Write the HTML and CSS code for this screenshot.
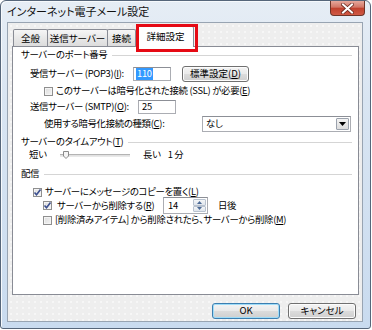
FILE: index.html
```html
<!DOCTYPE html>
<html>
	<head>
		<meta charset="UTF-8">
		<title>インターネット電子メール設定</title>
		<link rel="stylesheet" href="styles.css">
	</head>
	<body>
		<div class="window">
			<div class="titlebar">
				<span class="title">インターネット電子メール設定</span>
				<span class="close">
					<svg width="13" height="11" viewBox="0 0 13 11">
						<path d="M2 1.5 L11 9.5 M11 1.5 L2 9.5" stroke="#6b2a20" stroke-width="3.6" stroke-linecap="square"/>
						<path d="M2 1.5 L11 9.5 M11 1.5 L2 9.5" stroke="#fff" stroke-width="2" stroke-linecap="square"/>
					</svg>
				</span>
			</div>
			<div class="client">
				<div class="tabs">
					<span class="tab t1">全般</span>
					<span class="tab t2">送信サーバー</span>
					<span class="tab t3">接続</span>
					<span class="tab active">詳細設定<i class="mark"></i></span>
				</div>
				<div class="panel">
					<div class="group">サーバーのポート番号</div>
					<div class="row pop">
						<span class="label lpop">受信サーバー (POP3)(<u>I</u>):</span>
						<span class="input in-pop"><span class="sel">110</span></span>
						<span class="btn std">標準設定(<u>D</u>)</span>
					</div>
					<div class="row ssl">
						<i class="cb"></i>
						<span class="cbt">このサーバーは暗号化された接続 (SSL) が必要(<u>E</u>)</span>
					</div>
					<div class="row smtp">
						<span class="label lsmtp">送信サーバー (SMTP)(<u>O</u>):</span>
						<span class="input in-smtp">25</span>
					</div>
					<div class="row enc">
						<span class="label lenc">使用する暗号化接続の種類(<u>C</u>):</span>
						<span class="select">
							<span class="val">なし</span>
							<span class="drop">
								<svg width="7" height="4" viewBox="0 0 7 4"><path d="M0 0 H7 L3.5 4 Z" fill="#000"/></svg>
							</span>
						</span>
					</div>
					<div class="group g2">サーバーのタイムアウト(<u>T</u>)</div>
					<div class="row slide">
						<span class="short">短い</span>
						<span class="track">
							<svg class="thumb" width="6" height="8" viewBox="0 0 6 8"><path d="M0.5 0.5 H5.5 V5 L3 7.5 L0.5 5 Z" fill="#f4f4f4" stroke="#8a8a8a"/></svg>
						</span>
						<span class="long">長い</span>
						<span class="min">1 分</span>
					</div>
					<div class="group g3">配信</div>
					<div class="row c1">
						<i class="cb on"><svg width="9" height="9" viewBox="0 0 9 9"><path d="M1.5 4.5 L3.5 6.8 L7.5 1.5" fill="none" stroke="#3b4f8f" stroke-width="1.6"/></svg></i>
						<span class="cbt">サーバーにメッセージのコピーを置く(<u>L</u>)</span>
					</div>
					<div class="row c2">
						<i class="cb on"><svg width="9" height="9" viewBox="0 0 9 9"><path d="M1.5 4.5 L3.5 6.8 L7.5 1.5" fill="none" stroke="#3b4f8f" stroke-width="1.6"/></svg></i>
						<span class="cbt ldel">サーバーから削除する(<u>R</u>)</span>
						<span class="input spin">
							<span class="num">14</span>
							<span class="arrows">
								<span class="arr"><svg width="5" height="3" viewBox="0 0 5 3"><path d="M0 3 L2.5 0 L5 3 Z" fill="#4c6a96"/></svg></span>
								<span class="arr"><svg width="5" height="3" viewBox="0 0 5 3"><path d="M0 0 L2.5 3 L5 0 Z" fill="#4c6a96"/></svg></span>
							</span>
						</span>
						<span class="days">日後</span>
					</div>
					<div class="row c3">
						<i class="cb"></i>
						<span class="cbt">[削除済みアイテム] から削除されたら、サーバーから削除(<u>M</u>)</span>
					</div>
				</div>
				<div class="footer">
					<span class="btn ok">OK</span>
					<span class="btn">キャンセル</span>
				</div>
			</div>
		</div>
	</body>
</html>
```

FILE: styles.css
```css
*{
	box-sizing: border-box;
}
body{
	margin: 0;
	background: #fff;
	font: 9.4px/1 "Noto Sans CJK JP", "Noto Sans", sans-serif;
	font-feature-settings: "palt";
	letter-spacing: -0.3px;
	color: #000;
	white-space: nowrap;
}
u{
	text-decoration: underline;
	text-underline-offset: 1px;
}
.window{
	width: 371px;
	height: 329px;
	border: 1px solid #56667a;
	border-radius: 6px 6px 3px 3px;
	background: linear-gradient(to bottom, #e6edf5, #d9e5f2 30%, #c9dbef);
	box-shadow: inset 1px 1px 0 #f6f9fc;
}
.titlebar{
	height: 21px;
	display: flex;
	align-items: flex-start;
	padding-left: 6px;
}
.title{
	font-size: 11px;
	letter-spacing: 0;
	padding-top: 5px;
	color: #111;
}
.close{
	margin-left: auto;
	margin-right: 5px;
	width: 35px;
	height: 15px;
	border: 1px solid #6e3428;
	border-top: none;
	border-radius: 0 0 4px 4px;
	background: linear-gradient(to bottom, #e6a89c, #d27565 45%, #c0402d 50%, #d05a45);
	display: flex;
	align-items: center;
	justify-content: center;
}
.client{
	margin: 0 7px 0 6px;
	height: 300px;
	border: 1px solid #98a4b2;
	padding: 3px 3px 0 4px;
	background-color: #eeeeee;
	background-image: radial-gradient(circle, #fbfbfb 0.6px, transparent 0.9px);
	background-size: 6px 6px;
}
.tabs{
	height: 20px;
	display: flex;
	align-items: flex-start;
	padding-left: 1px;
	font-size: 9.5px;
	letter-spacing: 0;
}
.tab{
	height: 17px;
	margin-top: 3px;
	border: 1px solid #898c95;
	border-bottom: none;
	border-radius: 2px 2px 0 0;
	background: linear-gradient(to bottom, #f6f6f6, #e8e8e8 50%, #dcdcdc);
	display: flex;
	align-items: center;
	justify-content: center;
	padding-top: 1px;
}
.t1{
	width: 35px;
}
.t2{
	width: 61px;
	margin-left: -1px;
}
.t3{
	width: 29px;
	margin-left: -1px;
}
.tab.active{
	width: 57px;
	height: 21px;
	margin-top: 0;
	margin-left: 1px;
	background: #fff;
	position: relative;
	z-index: 1;
	padding-top: 0;
}
.mark{
	position: absolute;
	left: -2px;
	top: -3px;
	width: 62px;
	height: 28px;
	border: 3px solid #e60a14;
}
.panel{
	height: 249px;
	border: 1px solid #898c95;
	background: #fff;
	padding: 2px 6px 0 8px;
}
.group{
	height: 12px;
	display: flex;
	align-items: center;
}
.group::after{
	content: "";
	flex: 1;
	height: 1px;
	background: #d5d5d5;
	margin-left: 5px;
}
.g2{
	margin-top: 4px;
}
.g3{
	margin-top: 7px;
}
.row{
	display: flex;
	align-items: center;
}
.label{
	flex: none;
	margin-left: 9px;
}
.lpop{
	width: 103px;
}
.lsmtp{
	width: 108px;
}
.lenc{
	width: 158px;
	margin-left: 23px;
}
.pop{
	height: 16px;
	margin-top: 5px;
}
.ssl{
	height: 12px;
	margin-top: 3px;
	padding-left: 23px;
}
.smtp{
	height: 15px;
	margin-top: 2px;
}
.enc{
	height: 16px;
	margin-top: 2px;
}
.input{
	height: 15px;
	border: 1px solid #abadb3;
	border-top-color: #8c8f96;
	background: #fff;
	display: flex;
	align-items: center;
	padding-left: 3px;
}
.in-pop{
	width: 38px;
	height: 14px;
	padding-left: 2px;
}
.sel{
	background: #3399ff;
	color: #fff;
	padding: 1px 1px;
}
.in-smtp{
	width: 38px;
	height: 14px;
}
.btn{
	height: 16px;
	border: 1px solid #707070;
	border-radius: 3px;
	background: linear-gradient(to bottom, #f4f4f4, #e9e9e9 50%, #dcdcdc 51%, #cfcfcf);
	box-shadow: inset 0 0 0 1px #fcfcfc;
	display: flex;
	align-items: center;
	justify-content: center;
	width: 68px;
	font-size: 9.5px;
	letter-spacing: 0;
}
.std{
	width: 67px;
	margin-left: 11px;
}
.select{
	width: 149px;
	height: 16px;
	border: 1px solid #abadb3;
	border-top-color: #8c8f96;
	background: #fff;
	display: flex;
	align-items: center;
	padding: 0 1px 0 3px;
}
.val{
	flex: 1;
}
.drop{
	width: 13px;
	height: 12px;
	border: 1px solid #9ba2ad;
	border-radius: 1px;
	background: linear-gradient(to bottom, #f3f3f3, #dcdcdc);
	display: flex;
	align-items: center;
	justify-content: center;
}
.slide{
	height: 12px;
	margin-top: 1px;
	padding-left: 8px;
}
.short{
	width: 31px;
}
.track{
	width: 70px;
	height: 3px;
	border-top: 1px solid #b4b4b4;
	border-bottom: 1px solid #e9e9e9;
	background: #e2e2e2;
	position: relative;
}
.thumb{
	position: absolute;
	left: 3px;
	top: -4px;
}
.long{
	margin-left: 13px;
}
.min{
	margin-left: 7px;
}
.cb{
	flex: none;
	width: 9px;
	height: 9px;
	border: 1px solid #8f8f8f;
	background: linear-gradient(135deg, #dcdcdc, #f4f4f4);
	box-shadow: inset 0 0 0 1px #f4f4f4;
	display: flex;
	align-items: center;
	justify-content: center;
}
.cb svg{
	display: block;
	margin: -1px;
}
.cbt{
	margin-left: 3px;
}
.c1{
	height: 10px;
	margin-top: 7px;
	padding-left: 12px;
}
.c2{
	height: 17px;
	margin-top: 0;
	padding-left: 22px;
}
.ldel{
	width: 106px;
	margin-left: 5px;
	flex: none;
}
.spin{
	width: 45px;
	height: 17px;
	padding: 0 1px 0 4px;
}
.num{
	flex: 1;
}
.arrows{
	width: 13px;
	height: 13px;
	display: flex;
	flex-direction: column;
}
.arr{
	flex: 1;
	border: 1px solid #b8c2cf;
	border-radius: 1px;
	background: linear-gradient(to bottom, #f4f6f8, #dfe5ec);
	display: flex;
	align-items: center;
	justify-content: center;
}
.days{
	margin-left: 10px;
}
.c3{
	height: 10px;
	margin-top: 1px;
	padding-left: 22px;
}
.footer{
	display: flex;
	justify-content: flex-end;
	gap: 8px;
	margin-top: 8px;
	padding-right: 3px;
}
.ok{
	border-color: #3c7fb1;
	box-shadow: inset 0 0 0 1px #9fdcf8;
}
```
